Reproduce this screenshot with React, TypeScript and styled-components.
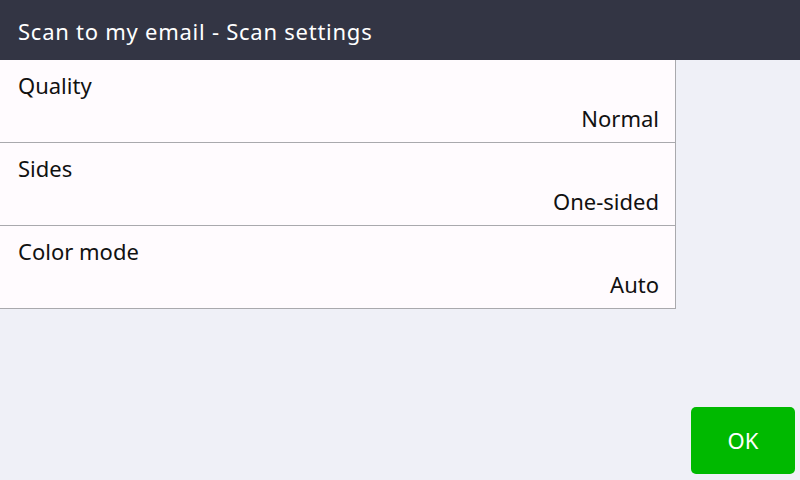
import React from "react";
import styled, { createGlobalStyle } from "styled-components";

const Global = createGlobalStyle`
  html, body { margin: 0; padding: 0; }
  body { width: 800px; height: 480px; overflow: hidden; background: #eff0f7; font-family: "Noto Sans", "DejaVu Sans", sans-serif; }
`;

const Screen = styled.div`
  width: 800px;
  height: 480px;
  display: flex;
  flex-direction: column;
  background: #eff0f7;
`;

const Header = styled.div`
  height: 60px;
  flex: none;
  background: #333544;
  color: #ffffff;
  font-size: 22px;
  letter-spacing: 0.75px;
  display: flex;
  align-items: center;
  padding-left: 18px;
  padding-top: 2px;
  box-sizing: border-box;
`;

const Body = styled.div`
  flex: 1;
  display: flex;
  flex-direction: column;
  justify-content: space-between;
`;

const List = styled.div`
  width: 676px;
  background: #fffbfe;
  border-right: 1px solid #a9a9ad;
  box-sizing: border-box;
  display: flex;
  flex-direction: column;
`;

const Row = styled.div`
  height: 83px;
  box-sizing: border-box;
  border-bottom: 1px solid #a9a9ad;
  padding: 9px 16px 0 18px;
  display: flex;
  flex-direction: column;
  color: #111;
  font-size: 22px;
  line-height: 32px;
`;

const Label = styled.div`
  text-align: left;
`;

const Value = styled.div`
  text-align: right;
  margin-top: 1px;
`;

const Footer = styled.div`
  display: flex;
  justify-content: flex-end;
  padding: 0 5px 6px 0;
`;

const OkButton = styled.button`
  width: 104px;
  height: 67px;
  border: none;
  border-radius: 5px;
  background: #00b900;
  color: #fff;
  font-family: "Noto Sans", "DejaVu Sans", sans-serif;
  font-size: 22px;
  padding: 0 0 2px 0;
`;

const settings = [
  { label: "Quality", value: "Normal" },
  { label: "Sides", value: "One-sided" },
  { label: "Color mode", value: "Auto" },
];

export default function App() {
  return (
    <>
      <Global />
      <Screen>
        <Header>Scan to my email - Scan settings</Header>
        <Body>
          <List>
            {settings.map((s) => (
              <Row key={s.label}>
                <Label>{s.label}</Label>
                <Value>{s.value}</Value>
              </Row>
            ))}
          </List>
          <Footer>
            <OkButton>OK</OkButton>
          </Footer>
        </Body>
      </Screen>
    </>
  );
}
